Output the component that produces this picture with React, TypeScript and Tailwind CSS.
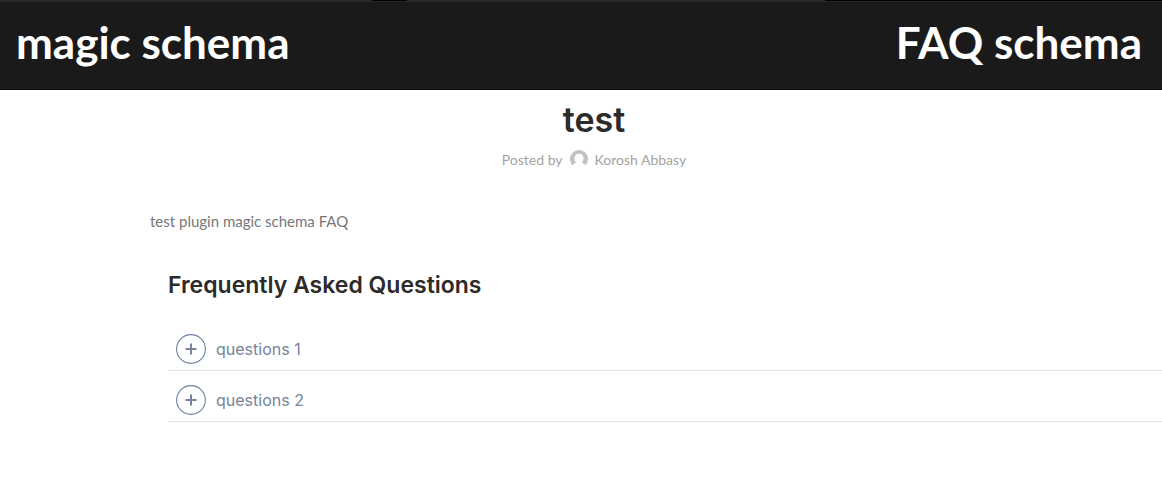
import { useState } from "react";

const questions = ["questions 1", "questions 2"];

function Question({ title }: { title: string }) {
  const [active, setActive] = useState(false);
  return (
    <li className="border-b border-[#e3e3e3]">
      <button
        type="button"
        aria-pressed={active}
        onClick={() => setActive(!active)}
        className="flex h-[50px] w-full items-center gap-[10px] px-2 pt-2 text-left font-['Inter',sans-serif] text-base leading-6 text-[#74849c]"
      >
        <svg viewBox="0 0 30 30" className="size-[30px] shrink-0" fill="none" stroke="#6b829e" aria-hidden="true">
          <circle cx="15" cy="15" r="14.4" strokeWidth="1.1" />
          <path d="M15 9.5v11M9.5 15h11" strokeWidth="2" stroke="#74849c" />
        </svg>
        <span>{title}</span>
      </button>
    </li>
  );
}

export default function App() {
  return (
    <div className="bg-white">
      <header className="border-b border-[#0c0a0b] bg-[#1a1a1a] font-['Lato',sans-serif] text-[44px] font-bold text-white">
        <div className="flex h-[2px] bg-[#23282c]" aria-hidden="true">
          <span className="w-[32%]" />
          <span className="h-px w-[3%] bg-black" />
          <span className="w-[36%]" />
          <span className="h-px grow bg-black" />
        </div>
        <div className="flex h-[87px] items-center justify-between pr-5 pb-2 pl-4 leading-[56px]">
          <span>magic schema</span>
          <span>FAQ schema</span>
        </div>
      </header>
      <main>
        <div className="flex flex-col items-center pt-2 pl-[26px]">
          <h1 className="font-['Inter',sans-serif] text-[34px] leading-[44px] font-semibold text-[#2d2a2a]">test</h1>
          <div className="mt-2 flex items-center font-['Lato',sans-serif] text-sm leading-5 text-[#a3a3a3]">
            <span>Posted by</span>
            <svg viewBox="0 0 18 18" className="mr-[7px] mb-[2px] ml-[7px] size-[18px]" aria-hidden="true">
              <path
                fill="#c3c3c3"
                d="M2.8 15.6A9 9 0 1 1 15.2 15.6C14.8 14.2 13.5 13.1 11.9 12.5C13 11.4 13.5 9.9 13.5 8.3C13.5 5.2 11.6 3.7 9 3.7S4.5 5.2 4.5 8.3C4.5 9.9 5 11.4 6.1 12.5C4.5 13.1 3.2 14.2 2.8 15.6Z"
              />
            </svg>
            <a href="#author">Korosh Abbasy</a>
          </div>
        </div>
        <div className="pt-[39px] pl-[150px]">
          <p className="font-['Lato',sans-serif] text-[15px] leading-6 text-[#777]">test plugin magic schema FAQ</p>
          <section className="pt-9 pl-[18px]">
            <h2 className="font-['Inter',sans-serif] text-[23px] leading-8 font-semibold text-[#2d2a2a]">
              Frequently Asked Questions
            </h2>
            <ul className="pt-[19px]">
              {questions.map((title) => (
                <Question key={title} title={title} />
              ))}
            </ul>
          </section>
        </div>
      </main>
    </div>
  );
}
